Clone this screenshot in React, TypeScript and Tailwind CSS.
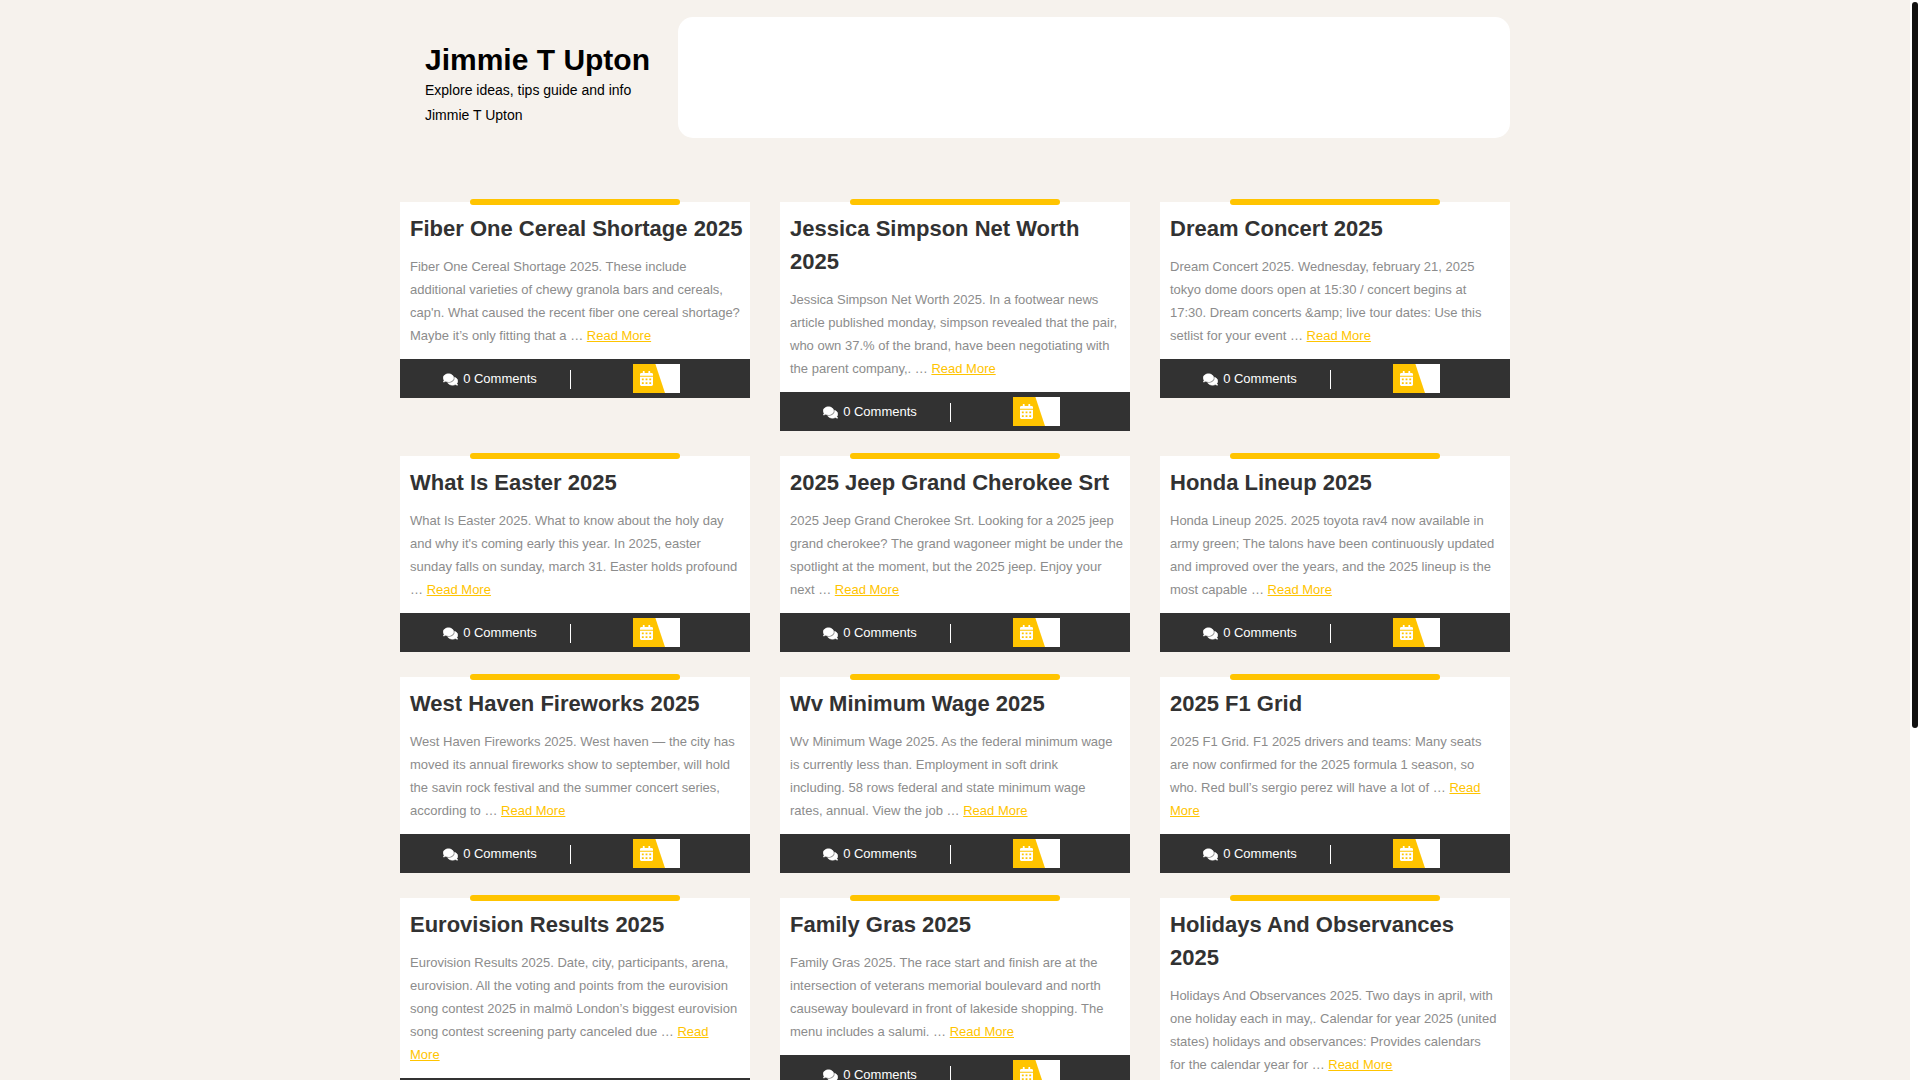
import { FaCalendarAlt, FaComments } from "react-icons/fa";

interface Post {
  title: string;
  excerpt: string;
  more?: string;
}

const posts: Post[] = [
  {
    title: "Fiber One Cereal Shortage 2025",
    excerpt:
      "These include additional varieties of chewy granola bars and cereals, cap'n. What caused the recent fiber one cereal shortage? Maybe it’s only fitting that a",
  },
  {
    title: "Jessica Simpson Net Worth 2025",
    excerpt:
      "In a footwear news article published monday, simpson revealed that the pair, who own 37.% of the brand, have been negotiating with the parent company,.",
  },
  {
    title: "Dream Concert 2025",
    excerpt:
      "Wednesday, february 21, 2025 tokyo dome doors open at 15:30 / concert begins at\n17:30. Dream concerts &amp; live tour dates: Use this setlist for your event",
  },
  {
    title: "What Is Easter 2025",
    excerpt:
      "What to know about the holy day and why it's coming early this year. In 2025, easter\nsunday falls on sunday, march 31. Easter holds profound",
  },
  {
    title: "2025 Jeep Grand Cherokee Srt",
    excerpt:
      "Looking for a 2025 jeep grand cherokee? The grand wagoneer might be under the spotlight at the moment, but the 2025 jeep. Enjoy your\nnext",
  },
  {
    title: "Honda Lineup 2025",
    excerpt:
      "2025 toyota rav4 now available in army green; The talons have been continuously updated and improved over the years, and the 2025 lineup is the most capable",
  },
  {
    title: "West Haven Fireworks 2025",
    excerpt:
      "West haven — the city has moved its annual fireworks show to september, will hold the savin rock festival and the summer concert series, according to",
  },
  {
    title: "Wv Minimum Wage 2025",
    excerpt:
      "As the federal minimum wage\nis currently less than. Employment in soft drink\nincluding. 58 rows federal and state minimum wage\nrates, annual. View the job",
  },
  {
    title: "2025 F1 Grid",
    excerpt:
      "F1 2025 drivers and teams: Many seats\nare now confirmed for the 2025 formula 1 season, so\nwho. Red bull’s sergio perez will have a lot of",
    more: "Read\nMore",
  },
  {
    title: "Eurovision Results 2025",
    excerpt:
      "Date, city, participants, arena, eurovision. All the voting and points from the eurovision song contest 2025 in malmö London’s biggest eurovision song contest screening party canceled due",
    more: "Read\nMore",
  },
  {
    title: "Family Gras 2025",
    excerpt:
      "The race start and finish are at the intersection of veterans memorial boulevard and north causeway boulevard in front of lakeside shopping. The menu includes a salumi.",
  },
  {
    title: "Holidays And Observances 2025",
    excerpt:
      "Two days in april, with one holiday each in may,. Calendar for year 2025 (united states) holidays and observances: Provides calendars\nfor the calendar year for",
  },
];

function PostCard({ title, excerpt, more = "Read More" }: Post) {
  return (
    <article className="relative bg-white">
      <span className="absolute -top-[3px] left-1/5 h-1.5 w-3/5 rounded-[3px] bg-[#ffc400]" />
      <div className="pt-2.5 pr-1.5 pb-3 pl-2.5">
        <h2 className="text-[22px] leading-[33px] font-bold text-[#323232]">
          <a href="#">{title}</a>
        </h2>
        <p className="mt-2.5 text-[13px] leading-[23px] whitespace-pre-line text-[#8c8c8c]">
          {`${title}. ${excerpt} … `}
          <a href="#" className="text-[#ffc400] underline">
            {more}
          </a>
        </p>
      </div>
      <footer className="grid h-[39px] grid-cols-2 items-center bg-[#323232] pt-px pr-2 text-[13px] text-white">
        <a href="#" className="flex h-[19px] items-center justify-center gap-[5px] border-r border-white pl-2.5">
          <FaComments strokeWidth={20} className="h-[13px] w-[15px]" />
          0 Comments
        </a>
        <div className="flex justify-center pb-px">
          <span className="flex h-[29px] w-[47px] items-center bg-white">
            <span className="flex h-full w-8 items-center bg-[#ffc400] pl-[7px] [clip-path:polygon(0_0,70%_0,100%_100%,0_100%)]">
              <FaCalendarAlt className="h-[15px] w-[13px]" />
            </span>
          </span>
        </div>
      </footer>
    </article>
  );
}

export default function App() {
  return (
    <div className="flex h-screen overflow-hidden bg-[#f6f2ed] font-['Liberation_Sans',Arial,sans-serif]">
      <div className="min-w-0 flex-1 overflow-hidden">
        <div className="mx-auto max-w-[1110px]">
          <header className="flex items-center pt-[17px]">
            <div className="w-[278px] shrink-0 pt-3.5 pl-[25px] text-sm leading-[25px] text-black">
              <h1 className="text-[30px] leading-9 font-bold whitespace-nowrap">
                <a href="#">Jimmie T Upton</a>
              </h1>
              <p>
                Explore ideas, tips guide and info
                <br />
                Jimmie T Upton
              </p>
            </div>
            <nav className="h-[121px] flex-1 rounded-[15px] bg-white" />
          </header>
          <main className="mt-16 grid grid-cols-3 items-start gap-x-[30px] gap-y-[25px]">
            {posts.map((post) => (
              <PostCard key={post.title} {...post} />
            ))}
          </main>
        </div>
      </div>
      <div className="w-2.5 shrink-0 bg-white p-0.5">
        <div className="h-[726px] rounded-full bg-[#111111]" />
      </div>
    </div>
  );
}
